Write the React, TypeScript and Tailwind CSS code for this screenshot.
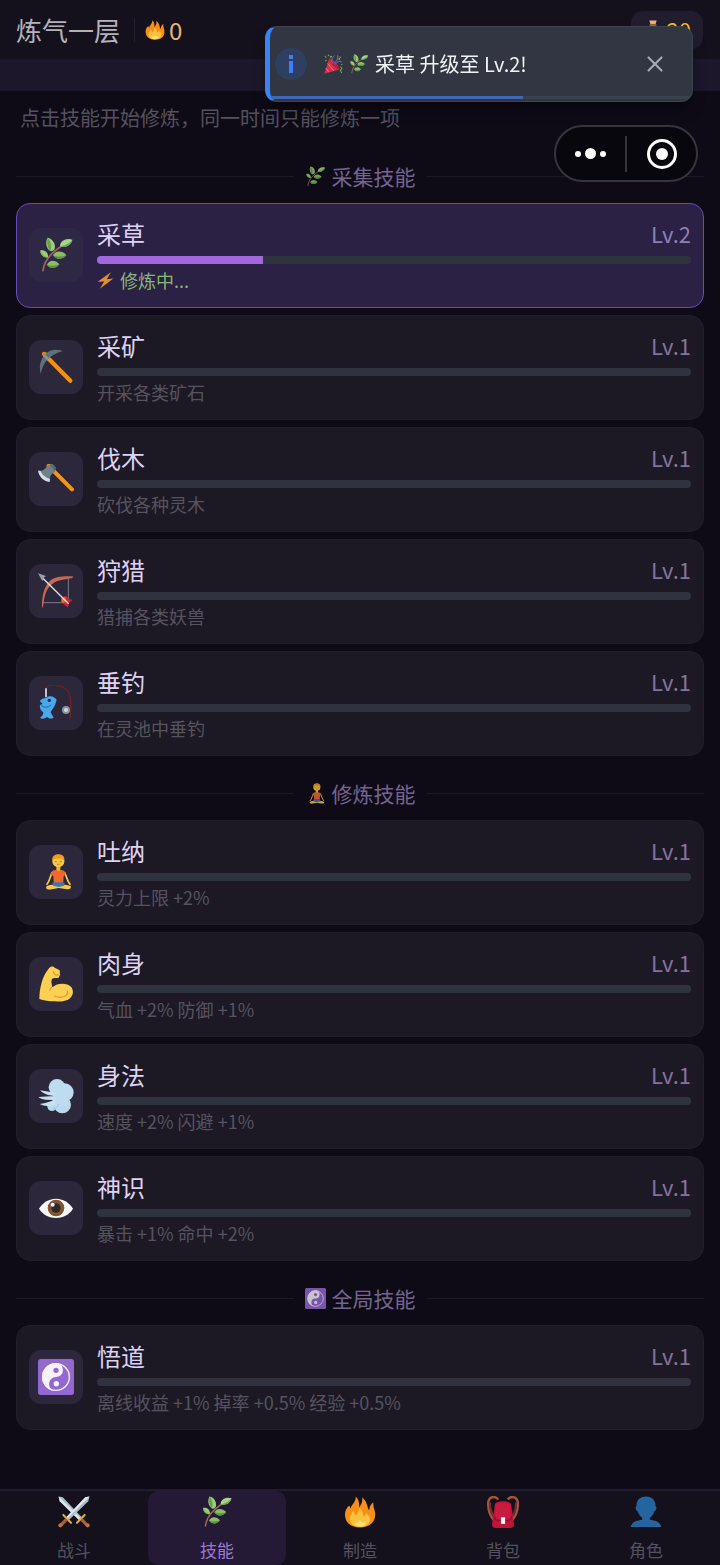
import type { ReactNode } from "react"
import { clsx } from "clsx"
import { X } from "lucide-react"

type IconName =
  | "herb"
  | "pickaxe"
  | "axe"
  | "bow"
  | "fishing"
  | "lotus"
  | "muscle"
  | "wind"
  | "eye"
  | "yinyang"
  | "fire"
  | "swords"
  | "backpack"
  | "person"
  | "popper"
  | "bolt"
  | "moneybag"

// All drawings share a 108 x 108 grid
const drawings: Record<IconName, ReactNode> = {
  herb: (
    <>
      <path d="M15 101C18 78 28 62 46 46C58 35 68 28 82 20" fill="none" stroke="#a1665a" strokeWidth="5" strokeLinecap="round" />
      <path d="M37 42C24 34 21 14 29 2C44 4 54 22 50 36C47 41 42 44 37 42Z" fill="#9ccc7a" />
      <path d="M37 42C28 32 26 14 29 2C38 12 42 28 37 42Z" fill="#689f48" />
      <path d="M66 28C66 12 84 2 103 8C100 24 82 34 66 28Z" fill="#a8d488" />
      <path d="M66 28C78 27 94 20 103 8C100 24 82 34 66 28Z" fill="#6da04e" />
      <path d="M30 61C18 64 6 54 7 40C20 37 32 46 30 61Z" fill="#9ccc7a" />
      <path d="M30 61C18 60 10 51 7 40C8 54 16 64 30 61Z" fill="#689f48" />
      <path d="M45 55C52 40 72 40 85 54C76 68 54 70 45 55Z" fill="#8bc062" />
      <path d="M45 55C56 60 72 60 85 54C76 68 54 70 45 55Z" fill="#5d9440" />
      <path d="M27 83C34 68 52 68 64 82C56 95 36 97 27 83Z" fill="#8bc062" />
      <path d="M27 83C38 87 52 87 64 82C56 95 36 97 27 83Z" fill="#5d9440" />
    </>
  ),
  pickaxe: (
    <>
      <path d="M18 15L97 95" stroke="#f5900f" strokeWidth="13" strokeLinecap="round" />
      <path d="M12 12L24 8L32 20L20 30Z" fill="#e07f12" />
      <path d="M74 6C52 -2 34 4 24 14C10 27 1 48 8 74C12 57 17 44 28 32C42 18 57 11 74 6Z" fill="#5c717c" />
      <path d="M20 14L32 26L26 33L15 21Z" fill="#82959e" />
    </>
  ),
  axe: (
    <>
      <path d="M32 15L102 85" stroke="#f5960f" strokeWidth="12" strokeLinecap="round" />
      <path d="M25 12L36 8L46 18Z" fill="#e08a1a" />
      <path d="M4 30C14 30 22 24 28 14L42 9L53 20L50 34C41 38 36 42 36 56C22 54 10 44 4 30Z" fill="#70808a" />
      <path d="M0 29C3 46 15 60 35 63L36 54C22 49 12 41 7 29Z" fill="#d4dee4" />
      <path d="M36 11L44 9L53 19L50 32Z" fill="#5a6971" />
    </>
  ),
  bow: (
    <>
      <path d="M91 15V89H13" fill="none" stroke="#a9a4aa" strokeWidth="2" />
      <path d="M104 10C80 9 52 9 36 23C18 40 11 70 12 106C18 98 16 90 18 82C22 57 30 42 44 32C60 20 80 20 104 15Z" fill="#c56a50" />
      <path d="M70 88C66 76 74 68 86 70L90 78L104 80L93 90L90 103L80 96Z" fill="#d8202e" />
      <path d="M70 78L82 71L85 86L72 91Z" fill="#ee6a35" />
      <path d="M10 11L92 92" stroke="#dce4ea" strokeWidth="4" />
      <path d="M0 1L24 9L17 14L13 24Z" fill="#92a4b0" />
    </>
  ),
  fishing: (
    <>
      <path d="M24 8C40 -6 72 0 88 16C102 32 101 62 95 103" fill="none" stroke="#612520" strokeWidth="4" />
      <path d="M98 36V100" stroke="#7c2a22" strokeWidth="3" strokeDasharray="4 3" />
      <path d="M24 38C36 30 48 34 56 44L52 58C48 68 42 74 38 82L47 98C38 103 32 100 27 96C20 101 14 103 6 99C13 94 16 88 16 82C8 78 4 68 6 60L14 57L5 48C10 42 17 39 24 38Z" fill="#49a8ec" />
      <path d="M8 60C14 68 29 69 40 60" fill="none" stroke="#1b6fae" strokeWidth="3" />
      <circle cx="34" cy="46" r="5" fill="#17324c" />
      <path d="M24 10V36" stroke="#e3e5e8" strokeWidth="5" />
      <circle cx="84" cy="75" r="12" fill="#899397" />
      <circle cx="84" cy="75" r="6" fill="#d2d8da" />
    </>
  ),
  lotus: (
    <>
      <path d="M25 98C30 90 78 90 98 96C101 103 96 107 82 105L62 102L42 106C28 108 22 104 25 98Z" fill="#fbc843" />
      <path d="M42 56C36 68 36 80 27 91M80 56C86 68 87 80 96 91" fill="none" stroke="#fbc843" strokeWidth="5" strokeLinecap="round" />
      <path d="M43 86C54 82 68 82 80 86L78 95L62 99L45 95Z" fill="#3d78ac" />
      <path d="M55 36H67V52H55Z" fill="#f2b12e" />
      <path d="M39 62C39 52 46 48 54 48C58 52 64 52 68 48C77 48 83 53 83 62L77 66L76 85H47L46 66Z" fill="#f2662f" />
      <circle cx="61" cy="22" r="18" fill="#fdc943" />
      <path d="M43 20C41 8 49 1 61 1C74 1 81 9 79 20C74 15 68 13 61 14C54 13 48 15 43 20Z" fill="#f29b1d" />
      <path d="M50 23H57M65 23H72M57 31H65" stroke="#a15d25" strokeWidth="2" />
    </>
  ),
  muscle: (
    <>
      <path d="M33 7C38 0 46 0 50 5L64 12C68 16 63 21 67 25L62 35C55 38 49 34 42 39C38 46 42 55 43 64C56 52 75 51 90 56C104 61 109 78 101 91C92 106 72 108 50 106C34 106 16 104 4 99C4 71 12 30 33 7Z" fill="#fcd052" />
      <path d="M88 75C91 90 72 99 49 90M46 17C48 26 54 28 62 27M40 64L36 72" fill="none" stroke="#e69838" strokeWidth="4" strokeLinecap="round" />
    </>
  ),
  wind: (
    <>
      <circle cx="57" cy="28" r="25" fill="#bddcf0" />
      <circle cx="80" cy="43" r="27" fill="#bddcf0" />
      <circle cx="73" cy="80" r="26" fill="#b8d9ee" />
      <circle cx="42" cy="85" r="14" fill="#b8d9ee" />
      <path d="M50 35H88V85H40Z" fill="#bddcf0" />
      <path d="M6 37L52 44V55L30 51C20 48 12 43 6 37ZM1 57L50 54V66L22 65C14 64 7 61 1 57ZM5 78C24 76 36 70 52 66V80C34 86 18 85 5 78Z" fill="#c9e2f3" />
      <path d="M44 94C54 92 61 86 61 78" fill="none" stroke="#9cc5e0" strokeWidth="3" />
    </>
  ),
  eye: (
    <>
      <path d="M3 56C26 16 82 16 105 56C82 93 26 93 3 56Z" fill="#fafafa" />
      <circle cx="54" cy="54" r="25" fill="#85532f" />
      <circle cx="54" cy="54" r="14" fill="#2a2a2d" />
      <circle cx="44" cy="44" r="6" fill="#ffffff" />
    </>
  ),
  yinyang: (
    <>
      <rect width="108" height="108" rx="8" fill="#9468cf" />
      <circle cx="54" cy="54" r="40" fill="none" stroke="#f6f2fb" strokeWidth="4" />
      <path d="M54 12A42 42 0 0 0 54 96A21 21 0 0 1 54 54A21 21 0 0 0 54 12Z" fill="#f6f2fb" />
      <circle cx="54" cy="34" r="8" fill="#9468cf" />
      <circle cx="55" cy="74" r="8" fill="#f6f2fb" />
    </>
  ),
  fire: (
    <>
      <path d="M39 2C42 18 26 28 22 42L18 32C5 42 2 56 4 70C7 94 27 106 54 106C82 106 103 93 105 67C107 50 98 43 99 22C90 27 86 37 85 48C78 43 82 22 61 4C65 22 55 32 51 40C52 24 50 10 39 2Z" fill="#f78e16" />
      <path d="M54 104C32 104 18 92 20 75C21 64 28 61 30 50C36 55 36 62 38 67C46 61 51 52 51 40C64 50 64 60 67 69C71 66 73 62 74 57C86 66 90 75 87 86C83 98 71 104 54 104Z" fill="#fcc23c" />
      <path d="M54 104C40 103 34 98 35 90C45 92 52 88 54 82C60 88 66 91 74 88C74 97 68 104 54 104Z" fill="#fde272" />
    </>
  ),
  swords: (
    <>
      <path d="M2 2L16 4L80 72L70 80L6 18Z" fill="#aebfca" />
      <path d="M2 2L76 75L70 80L6 18Z" fill="#dce6ec" />
      <path d="M106 2L92 4L28 72L38 80L102 18Z" fill="#aebfca" />
      <path d="M106 2L32 75L28 72L92 4Z" fill="#e2ebf0" />
      <path d="M18 64L44 90M90 64L64 90" stroke="#e9a83c" strokeWidth="7" strokeLinecap="round" />
      <path d="M28 80L10 98M80 80L98 98" stroke="#a85f3c" strokeWidth="11" />
      <circle cx="8" cy="99" r="7" fill="#c46f3c" />
      <circle cx="100" cy="99" r="7" fill="#c46f3c" />
    </>
  ),
  backpack: (
    <>
      <path d="M38 12C28 -2 6 2 4 22C3 46 10 68 24 82M70 12C80 -2 102 2 104 22C105 46 98 68 84 82" fill="none" stroke="#a5543f" strokeWidth="8" />
      <path d="M10 22C10 44 15 60 26 72M98 22C98 44 93 60 82 72" fill="none" stroke="#6e332a" strokeWidth="7" />
      <path d="M26 32C26 22 38 18 54 18C70 18 82 22 82 32L91 96C91 104 86 108 78 108H30C22 108 17 104 17 96Z" fill="#c01438" />
      <path d="M29 30C29 21 79 21 79 30V72C79 82 29 82 29 72Z" fill="#c91a40" />
      <path d="M25 68C25 82 30 84 54 84C78 84 83 82 83 68" fill="none" stroke="#8f0f2b" strokeWidth="4" />
      <rect x="47" y="72" width="14" height="22" fill="#f8f3f3" />
    </>
  ),
  person: (
    <path d="M54 2C75 2 86 14 86 34C92 38 89 50 82 52C79 62 73 69 67 73V80C84 83 101 85 106 105H2C7 85 24 83 41 80V73C35 69 29 62 26 52C19 50 16 38 22 34C22 14 33 2 54 2Z" fill="#25659f" />
  ),
  popper: (
    <>
      <path d="M34 24L88 84L6 106Z" fill="#dc2c4c" />
      <path d="M25 50L58 91M16 76L31 98" stroke="#f0788a" strokeWidth="5" />
      <ellipse cx="61" cy="54" rx="11" ry="38" transform="rotate(-42 61 54)" fill="#b3213f" />
      <path d="M49 50C45 30 51 16 62 8M66 56C77 40 88 38 101 42" fill="none" stroke="#4a8bd0" strokeWidth="5" />
      <path d="M59 50C74 42 82 27 79 7" fill="none" stroke="#8d6ac0" strokeWidth="5" />
      <path d="M10 12L18 20M27 5L34 11M11 38L20 34M89 14L96 20M97 57L105 55M95 68L102 78L94 88L101 103" fill="none" stroke="#6da546" strokeWidth="6" />
      <path d="M39 18L46 12M84 28L92 26" stroke="#f3b33c" strokeWidth="7" />
    </>
  ),
  bolt: <path d="M88 2L4 62L46 60L18 106L104 42L62 46Z" fill="#e0902e" />,
  moneybag: (
    <>
      <path d="M34 3H74L68 22H40Z" fill="#f0b070" />
      <path d="M40 28C12 46 4 80 14 98C22 108 86 108 94 98C104 80 96 46 68 28Z" fill="#f0a860" />
      <path d="M36 22H72V32H36Z" fill="#a35e3f" />
      <path d="M64 56C52 48 42 54 44 64C48 72 65 68 65 80C64 90 50 91 41 83M54 46V96" fill="none" stroke="#8c5634" strokeWidth="5" />
    </>
  ),
}

const Icon = ({ name, className }: { name: IconName; className: string }) => (
  <svg viewBox="0 0 108 108" aria-hidden="true" className={clsx("shrink-0", className)}>
    {drawings[name]}
  </svg>
)

interface Skill {
  name: string
  icon: IconName
  level: number
  progress: number
  note: string
  active?: boolean
}

const sections: { title: string; icon: IconName; skills: Skill[] }[] = [
  {
    title: "采集技能",
    icon: "herb",
    skills: [
      { name: "采草", icon: "herb", level: 2, progress: 28, note: "修炼中...", active: true },
      { name: "采矿", icon: "pickaxe", level: 1, progress: 0, note: "开采各类矿石" },
      { name: "伐木", icon: "axe", level: 1, progress: 0, note: "砍伐各种灵木" },
      { name: "狩猎", icon: "bow", level: 1, progress: 0, note: "猎捕各类妖兽" },
      { name: "垂钓", icon: "fishing", level: 1, progress: 0, note: "在灵池中垂钓" },
    ],
  },
  {
    title: "修炼技能",
    icon: "lotus",
    skills: [
      { name: "吐纳", icon: "lotus", level: 1, progress: 0, note: "灵力上限 +2%" },
      { name: "肉身", icon: "muscle", level: 1, progress: 0, note: "气血 +2% 防御 +1%" },
      { name: "身法", icon: "wind", level: 1, progress: 0, note: "速度 +2% 闪避 +1%" },
      { name: "神识", icon: "eye", level: 1, progress: 0, note: "暴击 +1% 命中 +2%" },
    ],
  },
  {
    title: "全局技能",
    icon: "yinyang",
    skills: [
      { name: "悟道", icon: "yinyang", level: 1, progress: 0, note: "离线收益 +1% 掉率 +0.5% 经验 +0.5%" },
    ],
  },
]

const tabs: { label: string; icon: IconName; href: string }[] = [
  { label: "战斗", icon: "swords", href: "#battle" },
  { label: "技能", icon: "herb", href: "#skills" },
  { label: "制造", icon: "fire", href: "#craft" },
  { label: "背包", icon: "backpack", href: "#bag" },
  { label: "角色", icon: "person", href: "#role" },
]

const SkillCard = ({ skill }: { skill: Skill }) => (
  <button
    type="button"
    className={clsx(
      "flex w-full items-center gap-3.5 rounded-[14px] border px-3 pt-[13px] pb-[15px] text-left",
      skill.active ? "border-[#6a48b8] bg-[#2b2145]" : "border-[#211e2b] bg-[#1c1924]"
    )}
  >
    <span
      className={clsx(
        "flex size-[54px] shrink-0 items-center justify-center rounded-xl",
        skill.active ? "bg-[#2f2844]" : "bg-[#2c273b]"
      )}
    >
      <Icon name={skill.icon} className="size-9" />
    </span>
    <span className="flex min-w-0 flex-1 flex-col">
      <span className="mb-1.5 flex items-center justify-between leading-[33px]">
        <span className="text-2xl leading-[33px] text-[#ddd2f4]">{skill.name}</span>
        <span
          className={clsx(
            "text-[22px] leading-[33px]",
            skill.active ? "text-[#8d7fb3]" : "text-[#83749f]"
          )}
        >
          Lv.{skill.level}
        </span>
      </span>
      <span className="block h-2 overflow-hidden rounded-full bg-[#2f323f]">
        <span className="block h-full bg-[#a168de]" style={{ width: `${skill.progress}%` }} />
      </span>
      <span
        className={clsx(
          "mt-1 flex items-center gap-1.5 text-lg leading-6",
          skill.active ? "text-[#86b878]" : "text-[#57525f]"
        )}
      >
        {skill.active && <Icon name="bolt" className="size-[17px]" />}
        {skill.note}
      </span>
    </span>
  </button>
)

const Toast = () => (
  <div
    role="status"
    className="fixed top-[26px] right-[27px] z-30 flex h-[76px] w-[428px] items-center overflow-hidden rounded-xl border border-l-[5px] border-[#3d4450] border-l-[#3b82f6] bg-[#313642] pr-6 pl-[5px] text-xl text-[#f1f2f5] shadow-lg shadow-black/40"
  >
    <span className="flex size-8 items-center justify-center rounded-full bg-[#2e3f62]">
      <svg viewBox="0 0 32 32" aria-hidden="true" className="size-8">
        <path d="M16 13V25" stroke="#3b82f6" strokeWidth="4" />
        <path d="M16 7V11" stroke="#3b82f6" strokeWidth="4" />
      </svg>
    </span>
    <Icon name="popper" className="ml-4 size-5" />
    <Icon name="herb" className="ml-1.5 size-5" />
    <span className="ml-1.5 flex-1">采草 升级至 Lv.2!</span>
    <button type="button" aria-label="关闭" className="text-[#a4a8b0]">
      <X className="size-[26px]" strokeWidth={2} />
    </button>
    <span className="absolute inset-x-0 bottom-0.5 h-[3px] bg-[#37424f]">
      <span className="block h-full w-3/5 bg-[#3d69b4]" />
    </span>
  </div>
)

const Capsule = () => (
  <div className="fixed top-[125px] right-[22px] z-30 flex h-[57px] w-36 items-center rounded-full border-2 border-[#36343c] bg-[#08070d] text-white">
    <button type="button" aria-label="更多" className="flex flex-1 items-center justify-center gap-1">
      <span className="size-1.5 rounded-full bg-white" />
      <span className="size-[11px] rounded-full bg-white" />
      <span className="size-1.5 rounded-full bg-white" />
    </button>
    <span className="h-9 w-0.5 bg-[#36343c]" />
    <button type="button" aria-label="退出" className="flex flex-1 justify-center">
      <span className="flex size-[30px] items-center justify-center rounded-full border-[3px] border-white">
        <span className="size-3 rounded-full bg-white" />
      </span>
    </button>
  </div>
)

export default function App() {
  return (
    <div className="flex min-h-screen flex-col bg-[#0e0b17] font-['Noto_Sans_CJK_SC',sans-serif]">
      <header className="bg-[#14111d]">
        <div className="flex h-[59px] items-center pr-[17px] pl-4">
          <h1 className="text-[26px] text-[#b5b3b9]">炼气一层</h1>
          <span className="ml-3.5 h-6 w-px bg-[#25222e]" />
          <span className="ml-2.5 flex items-center gap-1 text-2xl text-[#eab676]">
            <Icon name="fire" className="size-5" />0
          </span>
          <span className="ml-auto flex h-[38px] items-center gap-1 rounded-xl bg-[#211c2e] px-3 text-[22px] text-[#e8c21c]">
            <Icon name="moneybag" className="size-5" />
            20
          </span>
        </div>
        <div className="h-8 bg-[#1d172b]" />
      </header>

      <main className="flex-1 px-4 pt-3 pb-4">
        <p className="pl-1 text-xl leading-[30px] text-[#55515e]">
          点击技能开始修炼，同一时间只能修炼一项
        </p>
        {sections.map((section) => (
          <section key={section.title} className="mt-[22px] first-of-type:mt-7">
            <h2 className="mb-3 flex items-center gap-[11px] text-[21px] leading-[30px] text-[#74648f]">
              <span className="h-px flex-1 bg-[#1c1926]" />
              <span className="flex items-center gap-1.5">
                <Icon name={section.icon} className="size-[21px] opacity-80" />
                {section.title}
              </span>
              <span className="h-px flex-1 bg-[#1c1926]" />
            </h2>
            <div className="flex flex-col gap-[7px]">
              {section.skills.map((skill) => (
                <SkillCard key={skill.name} skill={skill} />
              ))}
            </div>
          </section>
        ))}
      </main>

      <nav className="sticky bottom-0 flex gap-[5px] border-t-2 border-[#211c31] bg-[#14111d] px-[5px]">
        {tabs.map((tab) => {
          const current = tab.label === "技能"
          return (
            <a
              key={tab.label}
              href={tab.href}
              aria-current={current ? "page" : undefined}
              className={clsx(
                "flex flex-1 flex-col items-center gap-2.5 rounded-[10px] pt-[5px] pb-[3px] text-[17px] leading-6",
                current ? "bg-[#241a36] text-[#9a78d4]" : "text-[#55515e]"
              )}
            >
              <Icon name={tab.icon} className="size-8" />
              {tab.label}
            </a>
          )
        })}
      </nav>

      <Toast />
      <Capsule />
    </div>
  )
}
